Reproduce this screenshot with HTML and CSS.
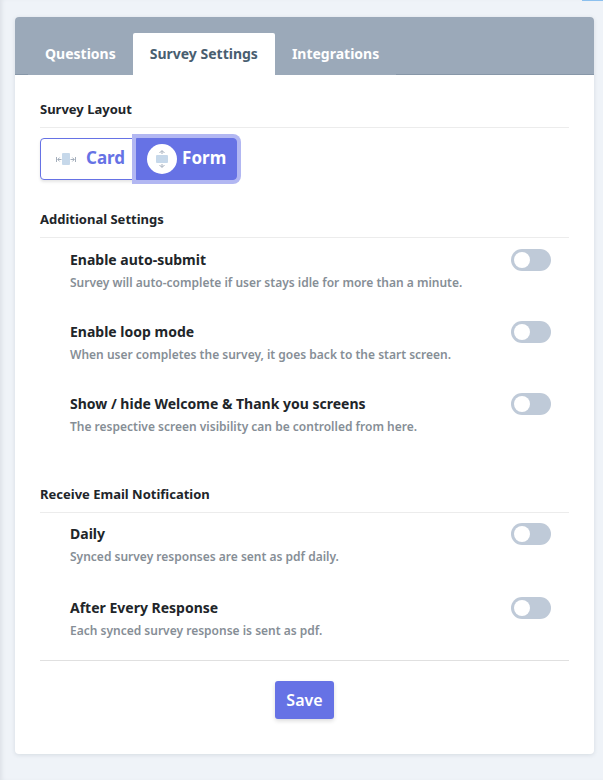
FILE: index.html
```html
<!DOCTYPE html>
<html lang="en">
<head>
	<meta charset="utf-8">
	<title>Survey Settings</title>
	<meta name="viewport" content="width=device-width, initial-scale=1">
	<link rel="stylesheet" href="styles.css">
</head>
<body>
	<div class="corner"></div>
	<main class="card">
		<header class="card-header">
			<nav class="tabs">
				<a class="tab" href="#questions">Questions</a>
				<a class="tab active" href="#settings">Survey Settings</a>
				<a class="tab" href="#integrations">Integrations</a>
			</nav>
		</header>

		<form class="card-body">
			<section>
				<h2>Survey Layout</h2>
				<div class="layout-group">
					<button type="button" class="layout-btn">
						<svg class="icon-card" width="20" height="14" viewBox="0 0 20 14">
							<rect x="6" y="1" width="8" height="12" rx="1" fill="#c6d8ea"/>
							<path d="M.5 5v5M5.500 7.500H2M3.700 5.500l-2 2 2 2M19.500 5v5M14.500 7.500H18M16.300 5.500l2 2-2 2" fill="none" stroke="#8e9bab" stroke-width=".8"/>
						</svg>
						<span class="name">Card</span>
					</button>
					<button type="button" class="layout-btn selected">
						<span class="circle">
							<svg width="14" height="20" viewBox="0 0 14 20">
								<rect x="1" y="6" width="12" height="8" rx="1" fill="#c6d8ea"/>
								<path d="M7 5V2M4.500 4L7 1.500 9.500 4M7 15v3M4.500 16L7 18.500 9.500 16" fill="none" stroke="#8e9bab" stroke-width=".8"/>
							</svg>
						</span>
						<span class="name">Form</span>
					</button>
				</div>
			</section>

			<section class="additional">
				<h2>Additional Settings</h2>
				<div class="setting">
					<label for="auto">Enable auto-submit</label>
					<p>Survey will auto-complete if user stays idle for more than a minute.</p>
					<input type="checkbox" class="switch" id="auto">
				</div>
				<div class="setting">
					<label for="loop">Enable loop mode</label>
					<p>When user completes the survey, it goes back to the start screen.</p>
					<input type="checkbox" class="switch" id="loop">
				</div>
				<div class="setting">
					<label for="screens">Show / hide Welcome &amp; Thank you screens</label>
					<p>The respective screen visibility can be controlled from here.</p>
					<input type="checkbox" class="switch" id="screens">
				</div>
			</section>

			<section class="email">
				<h2>Receive Email Notification</h2>
				<div class="setting">
					<label for="daily">Daily</label>
					<p>Synced survey responses are sent as pdf daily.</p>
					<input type="checkbox" class="switch" id="daily">
				</div>
				<div class="setting">
					<label for="every">After Every Response</label>
					<p>Each synced survey response is sent as pdf.</p>
					<input type="checkbox" class="switch" id="every">
				</div>
			</section>

			<div class="actions">
				<button type="submit" class="save">Save</button>
			</div>
		</form>
	</main>
</body>
</html>
```

FILE: styles.css
```css
* { box-sizing: border-box; }
body {
	margin: 0;
	min-height: 100vh;
	padding: 17px 9px 26px 15px;
	background: #eff3f8;
	box-shadow: inset 4px 0 4px -2px #dde1e7;
	font-family: "Noto Sans", "Open Sans", sans-serif;
	font-weight: 600;
	color: #212529;
}
h2, p { margin: 0; }

.corner {
	position: absolute;
	top: 0;
	right: 0;
	width: 21px;
	height: 1px;
	background: #8cc0ee;
}

.card {
	background: #fff;
	border-radius: 4px;
	box-shadow: 0 1px 4px rgba(60, 75, 95, .14);
}
.card-header {
	height: 58px;
	padding: 16px 13px 0;
	background: linear-gradient(#8797a8, #8797a8) bottom / 100% 1px no-repeat #9ba9b9;
	border-radius: 4px 4px 0 0;
}
.tabs { display: flex; width: fit-content; height: 42px; background: #9ba9b9; }
.tab {
	padding: 0 17px;
	border-radius: 2px 2px 0 0;
	font-size: 14px;
	font-weight: 700;
	line-height: 42px;
	color: #fff;
	text-decoration: none;
}
.tab.active { background: #fff; color: #495e70; }

.card-body { padding: 25px 25px 35px; }
h2 {
	padding-bottom: 9px;
	margin-bottom: 10px;
	border-bottom: 1px solid #ececec;
	font-size: 13px;
	font-weight: 700;
	line-height: 18px;
}

.layout-group { display: flex; }
.layout-btn {
	display: flex;
	align-items: center;
	height: 42px;
	padding: 0 10px 0 15px;
	border: 1px solid #6672e5;
	border-radius: 4px 0 0 4px;
	background: #fff;
	box-shadow: 0 2px 3px rgba(0, 0, 0, .1);
	font: 700 17px "Noto Sans", sans-serif;
	color: #6672e5;
}
.name { padding-bottom: 4px; }
.icon-card { flex: none; margin-right: 10px; }
.layout-btn.selected {
	padding: 0 10px;
	border-radius: 0 4px 4px 0;
	background: #6672e5;
	box-shadow: 0 0 0 4px #b2b7f2;
	color: #fff;
}
.circle {
	display: flex;
	align-items: center;
	justify-content: center;
	width: 30px;
	height: 30px;
	margin-right: 5px;
	border-radius: 50%;
	background: #fff;
}

.additional { margin-top: 30px; }
.email { margin-top: 40px; }
.additional h2 { margin-bottom: 11px; }
.setting {
	display: grid;
	grid-template-columns: 1fr 40px;
	column-gap: 20px;
	height: 72px;
	padding: 0 18px 0 30px;
	align-content: start;
}
.email .setting { height: 74px; }
.setting:last-child, .email .setting:last-child { height: 52px; }
.setting label { font-size: 14px; font-weight: 700; line-height: 22px; }
.setting p {
	grid-row: 2;
	font-size: 12px;
	line-height: 24px;
	color: #868e96;
}
.switch {
	grid-column: 2;
	grid-row: 1;
	width: 40px;
	height: 22px;
	margin: 0;
	appearance: none;
	border-radius: 11px;
	background: #bfcad8;
}
.switch::before {
	content: "";
	display: block;
	width: 16px;
	height: 16px;
	margin: 3px;
	border-radius: 50%;
	background: #fff;
}
.switch:checked { background: #6672e5; }
.switch:checked::before { margin-left: 21px; }

.actions {
	display: flex;
	justify-content: center;
	margin-top: 11px;
	padding-top: 20px;
	border-top: 1px solid #e0e0e0;
}
.save {
	height: 38px;
	padding: 0 11px;
	border: 0;
	border-radius: 3px;
	background: #6672e5;
	box-shadow: 0 2px 4px rgba(0, 0, 0, .14);
	font: 600 16px "Noto Sans", sans-serif;
	color: #fff;
}
```
